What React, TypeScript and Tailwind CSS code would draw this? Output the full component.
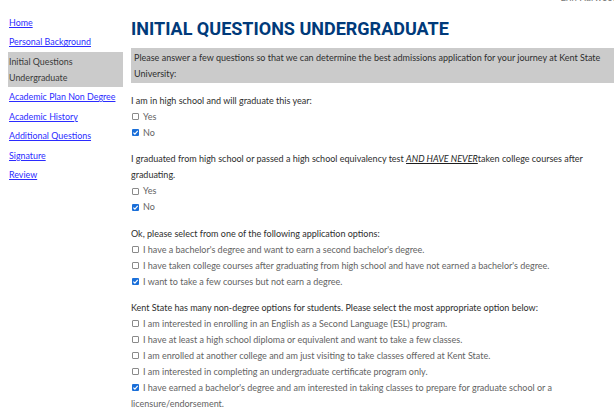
import React from "react";

function Box({ checked }: { checked?: boolean }) {
  return checked ? (
    <span className="inline-flex align-[-0.5px] w-[7px] h-[7px] mr-[4px] ml-[1px] rounded-[1px] bg-[#1a6fd9] items-center justify-center">
      <svg width="7" height="7" viewBox="0 0 7 7">
        <path d="M1.4 3.6 L2.9 5.1 L5.7 1.9" fill="none" stroke="#ffffff" strokeWidth="1.2" />
      </svg>
    </span>
  ) : (
    <span className="inline-block align-[-0.5px] w-[7px] h-[7px] mr-[4px] ml-[1px] rounded-[1px] border border-[#8a8a8a] bg-white" />
  );
}

function Opt({ checked, children }: { checked?: boolean; children: React.ReactNode }) {
  return (
    <div className="text-[#636363] whitespace-nowrap">
      <Box checked={checked} />
      {children}
    </div>
  );
}

function Q({ children }: { children: React.ReactNode }) {
  return <div className="text-[#2e2e2e] whitespace-nowrap">{children}</div>;
}

const links = ["Home", "Personal Background"];
const links2 = ["Academic Plan Non Degree", "Academic History", "Additional Questions", "Signature", "Review"];

export default function App() {
  return (
    <div
      className="relative w-[614px] h-[418px] overflow-hidden bg-white flex"
      style={{ fontFamily: "Lato, 'Liberation Sans', sans-serif" }}
    >
      <div className="absolute top-[-8px] right-[-4px] text-[9.5px] leading-[11px] text-[#777]">Erin Harwood</div>

      <nav className="w-[123px] shrink-0 pl-[8px] pt-[13px] text-[8.9px] leading-[16px]">
        {links.map((l) => (
          <div key={l} className="py-[1.8px] pl-[1px]">
            <a href="#" className="text-[#2b2bff] underline">{l}</a>
          </div>
        ))}
        <div className="bg-[#cbcbcb] py-[1.5px] pl-[1px] text-[#3a3a3a]">
          Initial Questions
          <br />
          Undergraduate
        </div>
        {links2.map((l) => (
          <div key={l} className="py-[1.8px] pl-[1px]">
            <a href="#" className="text-[#2b2bff] underline">{l}</a>
          </div>
        ))}
      </nav>

      <main className="ml-[8px] w-[500px] shrink-0 pt-[17px] text-[9px] leading-[16px]">
        <h1
          className="text-[18px] leading-[24px] font-bold text-[#003a7a] mb-[6.7px] whitespace-nowrap"
          style={{ fontFamily: "Roboto, 'Liberation Sans', sans-serif" }}
        >
          INITIAL QUESTIONS UNDERGRADUATE
        </h1>
        <div className="bg-[#cbcbcb] pt-[2px] pb-[1px] px-[3px] text-[#2e2e2e] whitespace-nowrap">
          Please answer a few questions so that we can determine the best admissions application for your journey at Kent State
          <br />
          University:
        </div>

        <div className="mt-[10.3px]">
          <Q>I am in high school and will graduate this year:</Q>
          <Opt>Yes</Opt>
          <Opt checked>No</Opt>
        </div>

        <div className="mt-[10.3px]">
          <Q>
            I graduated from high school or passed a high school equivalency test{" "}
            <span className="italic underline text-[#1e1e1e]">AND HAVE NEVER</span>taken college courses after
            <br />
            graduating.
          </Q>
          <Opt>Yes</Opt>
          <Opt checked>No</Opt>
        </div>

        <div className="mt-[10.3px]">
          <Q>Ok, please select from one of the following application options:</Q>
          <Opt>I have a bachelor's degree and want to earn a second bachelor's degree.</Opt>
          <Opt>I have taken college courses after graduating from high school and have not earned a bachelor's degree.</Opt>
          <Opt checked>I want to take a few courses but not earn a degree.</Opt>
        </div>

        <div className="mt-[10.3px]">
          <Q>Kent State has many non-degree options for students. Please select the most appropriate option below:</Q>
          <Opt>I am interested in enrolling in an English as a Second Language (ESL) program.</Opt>
          <Opt>I have at least a high school diploma or equivalent and want to take a few classes.</Opt>
          <Opt>I am enrolled at another college and am just visiting to take classes offered at Kent State.</Opt>
          <Opt>I am interested in completing an undergraduate certificate program only.</Opt>
          <Opt checked>
            I have earned a bachelor's degree and am interested in taking classes to prepare for graduate school or a
            <br />
            licensure/endorsement.
          </Opt>
        </div>
      </main>
    </div>
  );
}
